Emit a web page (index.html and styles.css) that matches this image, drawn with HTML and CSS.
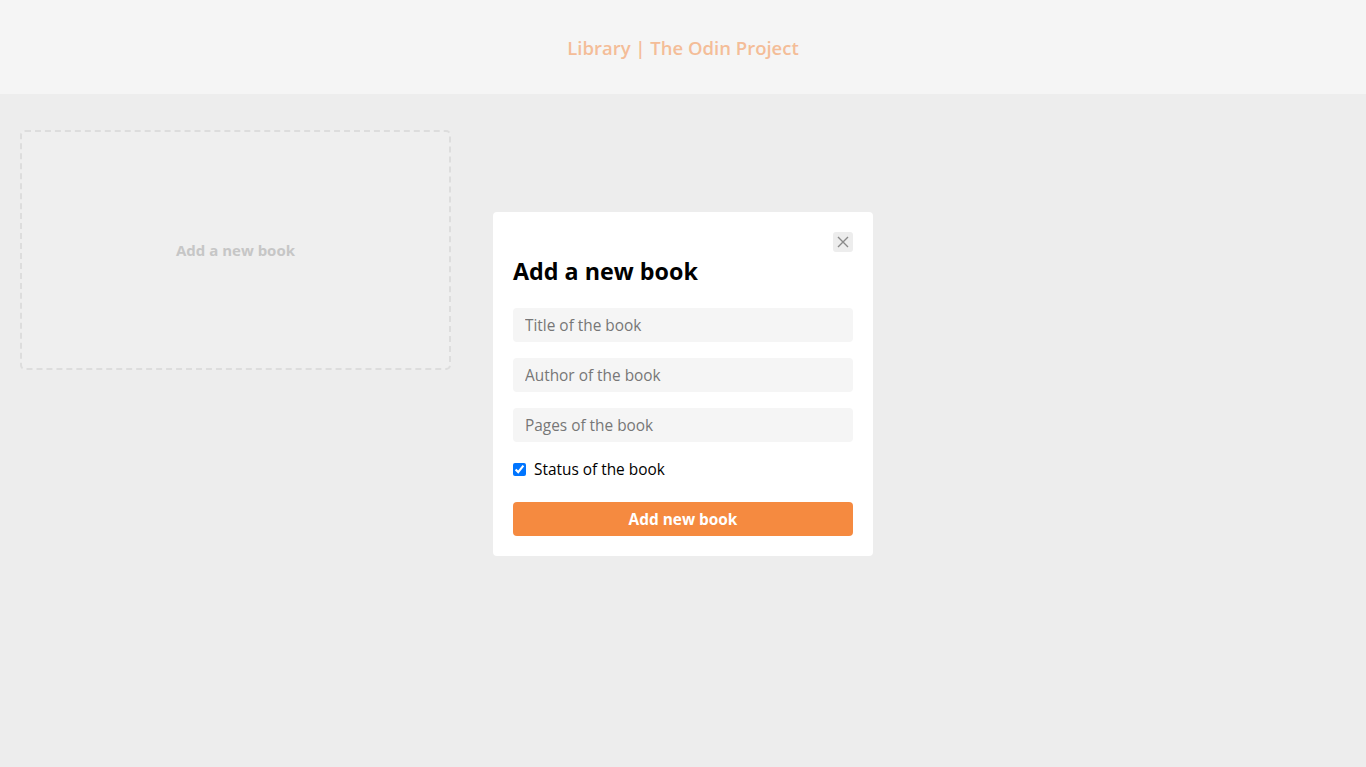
FILE: index.html
```html
<!DOCTYPE html>
<html lang="en">
<head>
<meta charset="utf-8">
<title>Library | The Odin Project</title>
<link rel="stylesheet" href="styles.css">
</head>
<body>
<header class="header">
  <h1 class="header-title">Library | The Odin Project</h1>
</header>
<main class="library">
  <div class="add-card">Add a new book</div>
</main>
<div class="backdrop">
  <form class="dialog">
    <div class="dialog-top">
      <button type="button" class="close-btn" aria-label="Close">
        <svg width="12" height="12" viewBox="0 0 12 12"><path d="M1 1L11 11M11 1L1 11" stroke="#8a8a8a" stroke-width="1.4" fill="none"/></svg>
      </button>
    </div>
    <h2 class="dialog-title">Add a new book</h2>
    <input class="field" type="text" placeholder="Title of the book">
    <input class="field" type="text" placeholder="Author of the book">
    <input class="field" type="text" placeholder="Pages of the book">
    <label class="status"><input type="checkbox" class="status-box" checked> Status of the book</label>
    <button type="button" class="submit-btn">Add new book</button>
  </form>
</div>
</body>
</html>
```
FILE: styles.css
```css
* { box-sizing: border-box; }
html, body { margin: 0; height: 100%; }
body {
  font-family: "Open Sans", "Noto Sans", sans-serif;
  background: #ededed;
  color: #000;
}
.header {
  height: 94px;
  background: #f5f5f5;
  display: flex;
  align-items: center;
  justify-content: center;
  padding-top: 1px;
}
.header-title {
  margin: 0;
  font-size: 18.5px;
  font-weight: 600;
  color: #f4bd98;
}
.library {
  padding: 36px 20px;
  display: grid;
  grid-template-columns: repeat(auto-fill, 431px);
}
.add-card {
  height: 240px;
  border: 2px dashed #dddddd;
  border-radius: 5px;
  background: #efefef;
  display: flex;
  align-items: center;
  justify-content: center;
  color: #c6c6c6;
  font-weight: 700;
  font-size: 15px;
}
.backdrop {
  position: fixed;
  inset: 0;
  display: flex;
  align-items: center;
  justify-content: center;
}
.dialog {
  width: 380px;
  background: #fff;
  border-radius: 4px;
  padding: 20px;
  display: flex;
  flex-direction: column;
}
.dialog-top {
  display: flex;
  justify-content: flex-end;
}
.close-btn {
  width: 20px;
  height: 20px;
  border: none;
  padding: 0;
  border-radius: 3px;
  background: #ededed;
  display: flex;
  align-items: center;
  justify-content: center;
}
.dialog-title {
  margin: 3px 0 21px;
  font-size: 23.3px;
  font-weight: 700;
  line-height: 32px;
}
.field {
  height: 34px;
  border: none;
  border-radius: 4px;
  background: #f5f5f5;
  padding: 2px 12px 0;
  font-family: inherit;
  font-size: 15.4px;
  margin-bottom: 16px;
}
.field::placeholder { color: #777; }
.status {
  display: flex;
  align-items: center;
  font-size: 15.4px;
  margin: 1px 0 21px;
  height: 22px;
}
.status-box {
  width: 13px;
  height: 13px;
  margin: 0 8px 0 0;
}
.submit-btn {
  height: 34px;
  border: none;
  border-radius: 4px;
  background: #f58a40;
  color: #fff;
  font-family: inherit;
  font-weight: 700;
  font-size: 15.4px;
  padding: 2px 0 0;
}
```
